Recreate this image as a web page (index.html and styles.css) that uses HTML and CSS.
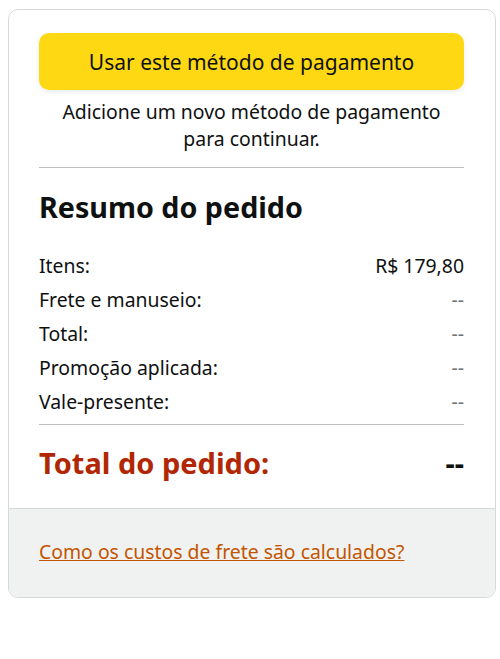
FILE: index.html
```html
<!DOCTYPE html>
<html lang="pt-BR">
<head>
    <meta charset="UTF-8">
    <meta name="viewport" content="width=device-width, initial-scale=1.0">
    <title>Resumo do pedido</title>
    <link rel="stylesheet" href="styles.css">
</head>
<body>
    <div class="box">
        <div class="box-inner">
            <button class="pay-button" type="button">Usar este método de pagamento</button>
            <p class="pay-hint">Adicione um novo método de pagamento para continuar.</p>
            <hr class="divider">

            <h2 class="summary-title">Resumo do pedido</h2>
            <ul class="summary-list">
                <li><span>Itens:</span><span>R$ 179,80</span></li>
                <li><span>Frete e manuseio:</span><span class="dash">--</span></li>
                <li><span>Total:</span><span class="dash">--</span></li>
                <li><span>Promoção aplicada:</span><span class="dash">--</span></li>
                <li><span>Vale-presente:</span><span class="dash">--</span></li>
            </ul>
            <hr class="divider divider-tight">

            <div class="grand-total">
                <span class="grand-label">Total do pedido:</span>
                <span class="grand-value">--</span>
            </div>
        </div>
        <div class="box-footer">
            <a href="#" class="shipping-link">Como os custos de frete são calculados?</a>
        </div>
    </div>
</body>
</html>
```

FILE: styles.css
```css
body {
    font-family: 'Noto Sans', 'Open Sans', sans-serif;
    margin: 9px 4px 8px 8px;
    background: #ffffff;
    color: #0f1111;
}
.box {
    border: 1px solid #d5d9d9;
    border-radius: 10px;
    overflow: hidden;
    background: #ffffff;
}
.box-inner {
    padding: 23px 31px 27px 30px;
}
.pay-button {
    display: block;
    width: 100%;
    height: 57px;
    background: #ffd814;
    border: none;
    border-radius: 10px;
    box-shadow: 0 2px 5px rgba(213, 217, 217, 0.5);
    font-family: inherit;
    font-size: 21px;
    color: #0f1111;
    cursor: pointer;
}
.pay-hint {
    margin: 8px 0 0;
    text-align: center;
    font-size: 19.4px;
    line-height: 27px;
    padding: 0 10px;
}
.divider {
    border: none;
    border-top: 1px solid #bbbfbf;
    margin: 15px 0 0;
}
.divider-tight {
    margin-top: 5px;
}
.summary-title {
    margin: 22px 0 0;
    font-size: 28.7px;
    font-weight: 700;
    line-height: 34px;
}
.summary-list {
    list-style: none;
    margin: 25px 0 0;
    padding: 0;
}
.summary-list li {
    display: flex;
    justify-content: space-between;
    font-size: 19.4px;
    line-height: 34px;
}
.dash {
    color: #6f7373;
}
.grand-total {
    display: flex;
    justify-content: space-between;
    align-items: center;
    margin-top: 20px;
    font-weight: 700;
    font-size: 29px;
    line-height: 36px;
}
.grand-label {
    color: #b12704;
}
.box-footer {
    background: #f0f2f2;
    border-top: 1px solid #d5d9d9;
    padding: 28px 30px 30px;
}
.shipping-link {
    color: #c45500;
    font-size: 19.4px;
    line-height: 30px;
    text-decoration: underline;
}
```
